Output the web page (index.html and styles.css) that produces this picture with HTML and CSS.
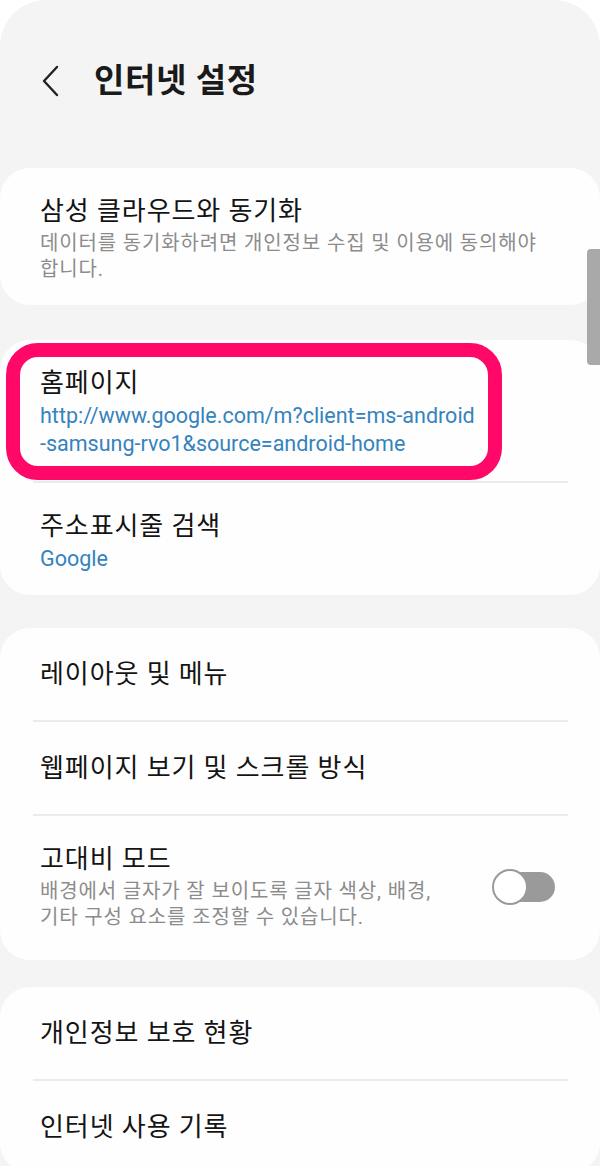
FILE: index.html
```html
<!DOCTYPE html>
<html lang="ko">
<head>
<meta charset="utf-8">
<title>인터넷 설정</title>
<link rel="stylesheet" href="styles.css">
</head>
<body>
<div class="screen">
  <header class="topbar">
    <svg class="back" width="20" height="32" viewBox="0 0 20 32" aria-hidden="true">
      <path d="M16 2 L3 16 L16 30" fill="none" stroke="#222" stroke-width="2.4" stroke-linecap="round" stroke-linejoin="round"/>
    </svg>
    <h1 class="title">인터넷 설정</h1>
  </header>

  <section class="card">
    <div class="row row-two">
      <div class="row-text">
        <div class="row-title">삼성 클라우드와 동기화</div>
        <div class="row-sub narrow">데이터를 동기화하려면 개인정보 수집 및 이용에 동의해야 합니다.</div>
      </div>
    </div>
  </section>

  <section class="card card-marked">
    <div class="highlight"></div>
    <div class="row row-two">
      <div class="row-text">
        <div class="row-title">홈페이지</div>
        <div class="row-link">http://www.google.com/m?client=ms-android<br>-samsung-rvo1&amp;source=android-home</div>
      </div>
    </div>
    <div class="divider"></div>
    <div class="row row-two row-last">
      <div class="row-text">
        <div class="row-title">주소표시줄 검색</div>
        <div class="row-link">Google</div>
      </div>
    </div>
  </section>

  <section class="card card-third">
    <div class="row row-one">
      <div class="row-title">레이아웃 및 메뉴</div>
    </div>
    <div class="divider"></div>
    <div class="row row-one">
      <div class="row-title">웹페이지 보기 및 스크롤 방식</div>
    </div>
    <div class="divider"></div>
    <div class="row row-two row-end">
      <div class="row-text">
        <div class="row-title">고대비 모드</div>
        <div class="row-sub narrow2">배경에서 글자가 잘 보이도록 글자 색상, 배경, 기타 구성 요소를 조정할 수 있습니다.</div>
      </div>
      <div class="toggle"><span class="knob"></span></div>
    </div>
  </section>

  <section class="card card-bottom">
    <div class="row row-one">
      <div class="row-title">개인정보 보호 현황</div>
    </div>
    <div class="divider"></div>
    <div class="row row-one">
      <div class="row-title">인터넷 사용 기록</div>
    </div>
  </section>

  <div class="scrollbar"></div>
</div>
</body>
</html>
```

FILE: styles.css
```css
* { box-sizing: border-box; }
html, body { margin: 0; padding: 0; }
body {
  background: #ffffff;
  font-family: Roboto, "Noto Sans CJK KR", sans-serif;
  color: #111;
}
.screen {
  position: relative;
  width: 600px;
  height: 1166px;
  overflow: hidden;
  background: #f4f4f4;
  border-radius: 46px 46px 0 0;
}
.topbar {
  height: 168px;
  display: flex;
  align-items: flex-start;
  padding: 64px 0 0 41px;
}
.back { display: block; margin-top: 1px; }
.title {
  margin: 0 0 0 33px;
  font-size: 33px;
  font-weight: 700;
  line-height: 34px;
  color: #1a1a1a;
  letter-spacing: 0.6px;
}
.card {
  position: relative;
  background: #fefefe;
  border-radius: 30px;
  margin-bottom: 35px;
}
.card-marked { margin-bottom: 33px; }
.card-third { margin-bottom: 27px; }
.card-bottom { margin-bottom: 0; }
.row {
  display: flex;
  align-items: center;
  padding: 0 40px;
}
.row-one { height: 92px; }
.row-two { padding-top: 28px; padding-bottom: 23px; }
.row-last { padding-bottom: 22px; }
.row-end { padding-bottom: 30px; }
.row-text { flex: 1; min-width: 0; }
.row-title {
  font-size: 26px;
  line-height: 30px;
  color: #141414;
  letter-spacing: 0.9px;
}
.row-sub {
  margin-top: 4px;
  font-size: 20px;
  line-height: 26px;
  color: #8c8c8c;
  letter-spacing: 0.85px;
  word-break: keep-all;
}
.narrow { width: 505px; }
.narrow2 { width: 430px; }
.row-link {
  margin-top: 4px;
  font-size: 21.5px;
  line-height: 28px;
  color: #3583bd;
}
.divider {
  height: 2px;
  margin: 0 32px 0 33px;
  background: #ececec;
}
.toggle {
  position: relative;
  width: 62px;
  height: 30px;
  margin-right: 5px;
  flex: none;
  background: #9a9a9a;
  border-radius: 15px;
}
.knob {
  position: absolute;
  left: -1px;
  top: -3px;
  width: 36px;
  height: 36px;
  border-radius: 50%;
  background: #fff;
  border: 2.5px solid #9a9a9a;
}
.highlight {
  position: absolute;
  left: 6px;
  top: 3px;
  width: 496px;
  height: 137px;
  border: 14px solid #ff0868;
  border-radius: 32px;
  pointer-events: none;
}
.scrollbar {
  position: absolute;
  right: 0;
  top: 249px;
  width: 13px;
  height: 116px;
  background: #a9a9a9;
  border-radius: 4px 0 0 4px;
}
```
